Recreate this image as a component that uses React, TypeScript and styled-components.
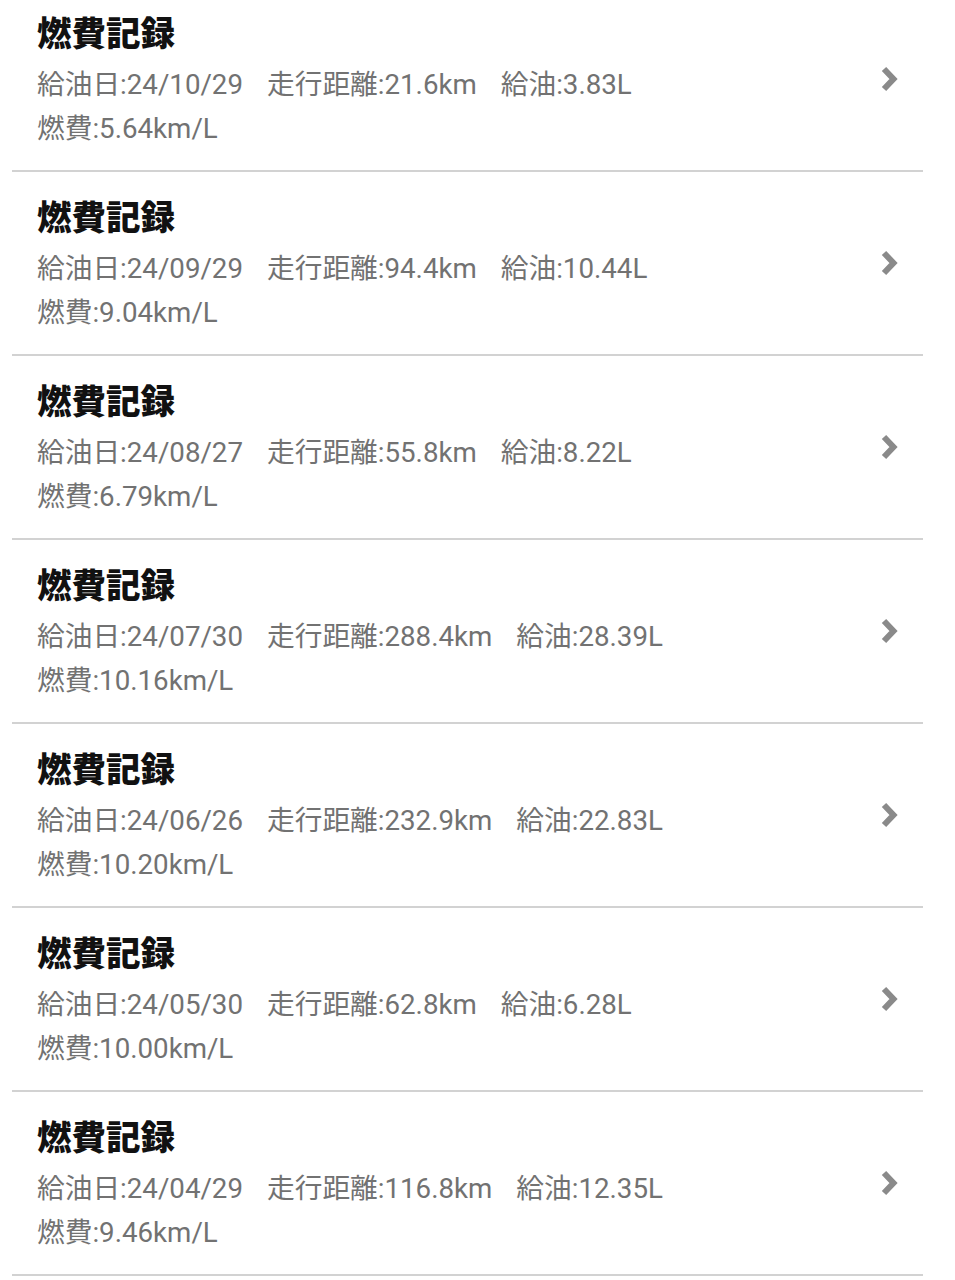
import React from "react";
import styled, { createGlobalStyle } from "styled-components";

const GlobalStyle = createGlobalStyle`
  html, body { margin: 0; padding: 0; background: #ffffff; }
  body { font-family: Roboto, "Noto Sans CJK JP", sans-serif; }
`;

const List = styled.div`
  margin-top: -12px;
  display: flex;
  flex-direction: column;
`;

const Row = styled.div`
  display: flex;
  align-items: center;
  margin-left: 12px;
  width: 863px;
  height: 182px;
  padding: 0 23px 0 25px;
  border-bottom: 2px solid #d2d2d2;
`;

const Body = styled.div`
  flex: 1;
  display: flex;
  flex-direction: column;
  padding-top: 5px;
`;

const Title = styled.div`
  font-family: Roboto, "Noto Sans CJK JP", sans-serif;
  font-weight: 900;
  font-size: 34.5px;
  line-height: 44px;
  color: #111111;
`;

const InfoLine = styled.div<{ $first?: boolean }>`
  display: flex;
  gap: 24px;
  font-size: 27.7px;
  line-height: 44px;
  color: #727272;
  margin-top: ${(p) => (p.$first ? "7px" : "0")};
  white-space: nowrap;
`;

const Chevron = styled.svg`
  flex: none;
  width: 20px;
  height: 28px;
`;

type Rec = { date: string; dist: string; fuel: string; eff: string };

const records: Rec[] = [
  { date: "24/10/29", dist: "21.6km", fuel: "3.83L", eff: "5.64km/L" },
  { date: "24/09/29", dist: "94.4km", fuel: "10.44L", eff: "9.04km/L" },
  { date: "24/08/27", dist: "55.8km", fuel: "8.22L", eff: "6.79km/L" },
  { date: "24/07/30", dist: "288.4km", fuel: "28.39L", eff: "10.16km/L" },
  { date: "24/06/26", dist: "232.9km", fuel: "22.83L", eff: "10.20km/L" },
  { date: "24/05/30", dist: "62.8km", fuel: "6.28L", eff: "10.00km/L" },
  { date: "24/04/29", dist: "116.8km", fuel: "12.35L", eff: "9.46km/L" },
];

export default function App() {
  return (
    <>
      <GlobalStyle />
      <List>
        {records.map((r, i) => (
          <Row key={i}>
            <Body>
              <Title>燃費記録</Title>
              <InfoLine $first>
                <span>給油日:{r.date}</span>
                <span>走行距離:{r.dist}</span>
                <span>給油:{r.fuel}</span>
              </InfoLine>
              <InfoLine>
                <span>燃費:{r.eff}</span>
              </InfoLine>
            </Body>
            <Chevron viewBox="0 0 20 28">
              <polyline
                points="4,4 13.5,14 4,24"
                fill="none"
                stroke="#8a8a8a"
                strokeWidth={6}
                strokeLinejoin="miter"
                strokeLinecap="butt"
              />
            </Chevron>
          </Row>
        ))}
      </List>
    </>
  );
}
